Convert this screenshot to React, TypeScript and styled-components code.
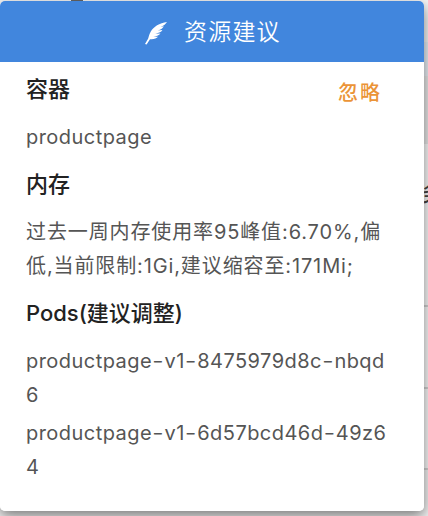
import React from 'react';
import styled, { createGlobalStyle } from 'styled-components';

const GlobalStyle = createGlobalStyle`
  * { box-sizing: border-box; }
  body { margin: 0; overflow: hidden; background: #e6e6e6; }
`;

const Screen = styled.div`
  position: relative;
  width: 428px;
  height: 516px;
  overflow: hidden;
  font-family: Inter, 'Noto Sans CJK SC', sans-serif;
`;

const BackRow = styled.div<{ $height: number; $tone: string; $line?: boolean }>`
  display: flex;
  align-items: flex-start;
  justify-content: flex-end;
  height: ${(p) => p.$height}px;
  background: ${(p) => p.$tone};
  border-bottom: ${(p) => (p.$line ? '2px solid #d2d2d2' : '0')};
`;

const BackLabel = styled.span`
  margin: 33px -16px 0 0;
  color: #444;
  font-size: 22px;
  font-weight: 500;
  line-height: 32px;
`;

const Notch = styled.span`
  width: 12px;
  height: 2px;
  margin-right: 345px;
  background: #666;
`;

const Card = styled.section`
  position: absolute;
  top: 1px;
  left: 0;
  width: 424px;
  height: 510px;
  overflow: hidden;
  border-radius: 5px;
  background: #fff;
`;

const CardShadow = styled.div`
  position: absolute;
  top: 1px;
  left: 0;
  width: 424px;
  height: 510px;
  border-radius: 5px;
  box-shadow: 0 5px 14px rgba(0, 0, 0, 0.5);
`;

const Header = styled.header`
  display: flex;
  align-items: center;
  height: 61px;
  padding-left: 144px;
  gap: 16px;
  background: #4186dd;
  color: #fff;
`;

const Title = styled.h1`
  margin: 0;
  font-size: 23px;
  font-weight: 350;
  line-height: 32px;
  letter-spacing: 1.2px;
`;

const Body = styled.div`
  padding: 10px 34px 0 26px;
`;

const Row = styled.div`
  display: flex;
  justify-content: space-between;
  align-items: flex-start;
  height: 34px;
`;

const Heading = styled.h2`
  margin: 0;
  font-size: 22px;
  font-weight: 500;
  line-height: 34px;
  letter-spacing: 0;
  color: #222;
`;

const Ignore = styled.button`
  margin: 4px 8px 0 0;
  padding: 0;
  border: 0;
  background: none;
  font: inherit;
  font-size: 20px;
  font-weight: 500;
  line-height: 34px;
  letter-spacing: 2px;
  color: #eb9437;
`;

const Text = styled.p<{ $top?: number; $spacing?: number }>`
  margin: ${(p) => p.$top ?? 14}px 0 0;
  font-size: 20px;
  font-weight: 400;
  line-height: 34px;
  letter-spacing: ${(p) => p.$spacing ?? 0.45}px;
  word-break: break-all;
  color: #555;
`;

const Group = styled.div`
  margin-bottom: 13px;
`;

const Dash = styled.span`
  font-size: 26px;
  font-weight: 300;
  line-height: 0;
  vertical-align: -2px;
  letter-spacing: 0.7px;
`;

const PodName = ({ name }: { name: string }) => (
  <>
    {name.split('-').map((part, i) => (
      <React.Fragment key={i}>
        {i > 0 && <Dash>-</Dash>}
        {part}
      </React.Fragment>
    ))}
  </>
);

const Feather = () => (
  <svg width="24" height="26" viewBox="0 0 24 26" fill="#fff" aria-hidden="true">
    <path d="M23 3C15.500 3.800 9.500 8 6.800 12.500C5.200 15.200 4.800 17.500 4.200 19.500L1 25L2.600 25.400L6 20.200C9.500 20.500 12.500 19.800 14 17.800L9.300 17.700C13 17.200 15.500 16.200 16.500 14.600L11.300 14.800C15 13.800 17.700 12.700 18.400 11L13.700 11.500C17 10.500 19 9.200 19.800 7.300L16.500 8C19.500 6.800 21.500 5.300 23 3Z" />
  </svg>
);

export default function App() {
  return (
    <>
      <GlobalStyle />
      <Screen>
        <BackRow $height={42} $tone="#f5f5f5"><Notch /></BackRow>
        <BackRow $height={34} $tone="#e9eff5" />
        <BackRow $height={68} $tone="#e8e8e8" />
        <BackRow $height={163} $tone="#fafafa" $line><BackLabel>务</BackLabel></BackRow>
        <BackRow $height={82} $tone="#fafafa" $line />
        <BackRow $height={81} $tone="#fafafa" $line />
        <BackRow $height={46} $tone="#f3f3f3" />
        <CardShadow />
        <Card>
          <Header>
            <Feather />
            <Title>资源建议</Title>
          </Header>
          <Body>
            <Group>
              <Row>
                <Heading>容器</Heading>
                <Ignore type="button">忽略</Ignore>
              </Row>
              <Text>productpage</Text>
            </Group>
            <Group>
              <Heading>内存</Heading>
              <Text $spacing={0.88}>过去一周内存使用率95峰值:6.70%,偏低,当前限制:1Gi,建议缩容至:171Mi;</Text>
            </Group>
            <Group>
              <Heading>Pods(建议调整)</Heading>
              <Text><PodName name="productpage-v1-8475979d8c-nbqd6" /></Text>
              <Text $top={4}><PodName name="productpage-v1-6d57bcd46d-49z64" /></Text>
            </Group>
          </Body>
        </Card>
      </Screen>
    </>
  );
}
